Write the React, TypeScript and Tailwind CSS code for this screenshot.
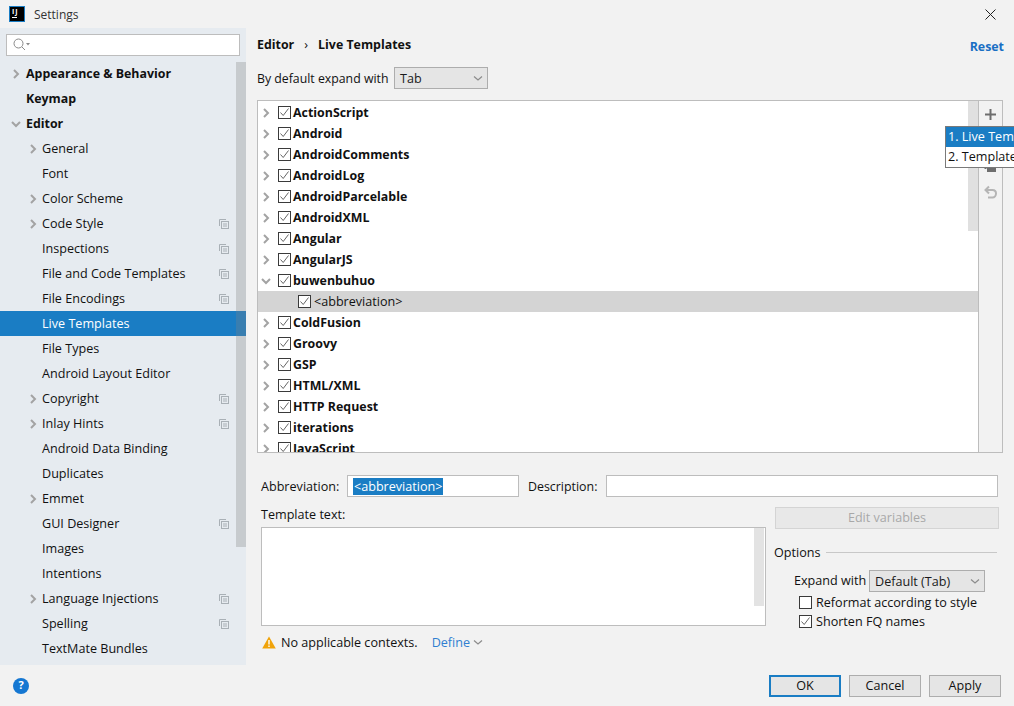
import React from "react";

const font = { fontFamily: '"Open Sans", "Noto Sans", "Noto Sans CJK SC", sans-serif' };

function Chevron({ open = false, thin = false, className = "" }: { open?: boolean; thin?: boolean; className?: string }) {
  return (
    <svg width="10" height="10" viewBox="0 0 10 10" className={className} fill="none" stroke={thin ? "#8c8c8c" : "#a3a3a3"} strokeWidth={thin ? 1.2 : 2}>
      {open ? <polyline points={thin ? "1,3.5 5,7 9,3.5" : "1,3 5,7 9,3"} /> : <polyline points="3,1 7,5 3,9" />}
    </svg>
  );
}

function Check({ checked = true }: { checked?: boolean }) {
  return (
    <span className="flex h-[13px] w-[13px] shrink-0 items-center justify-center border border-[#3a3a3a] bg-white">
      {checked && (
        <svg width="11" height="11" viewBox="0 0 11 11" fill="none" stroke="#666" strokeWidth="1">
          <polyline points="1.5,5.5 4.2,8.5 9.5,1.5" />
        </svg>
      )}
    </span>
  );
}

function CopyIcon() {
  return (
    <svg width="10" height="10" viewBox="0 0 10 10" fill="none" stroke="#a9b0b6" strokeWidth="1">
      <path d="M0.5 7V0.5H7" />
      <rect x="2.5" y="2.5" width="7" height="7" />
      <path d="M4 5H8M4 7H8" />
    </svg>
  );
}

function Select({ label, className }: { label: string; className: string }) {
  return (
    <div className={`flex h-[22px] items-center justify-between border border-[#adadad] bg-[#e5e5e5] pl-[5px] pr-[4px] text-[#1a1a1a] ${className}`}>
      <span className="mt-[2px]">{label}</span>
      <Chevron open thin />
    </div>
  );
}

function Button({ label, primary = false }: { label: string; primary?: boolean }) {
  return (
    <div className={`flex h-[22px] w-[72px] items-center justify-center bg-[#e5e5e5] text-[#111] ${primary ? "border-2 border-[#1a7dc4]" : "border border-[#adadad]"}`}>
      <span className="mt-[2px]">{label}</span>
    </div>
  );
}

type Nav = { t: string; bold?: boolean; lvl: 1 | 2; arrow?: "r" | "d"; copy?: boolean; sel?: boolean };
const nav: Nav[] = [
  { t: "Appearance & Behavior", bold: true, lvl: 1, arrow: "r" },
  { t: "Keymap", bold: true, lvl: 1 },
  { t: "Editor", bold: true, lvl: 1, arrow: "d" },
  { t: "General", lvl: 2, arrow: "r" },
  { t: "Font", lvl: 2 },
  { t: "Color Scheme", lvl: 2, arrow: "r" },
  { t: "Code Style", lvl: 2, arrow: "r", copy: true },
  { t: "Inspections", lvl: 2, copy: true },
  { t: "File and Code Templates", lvl: 2, copy: true },
  { t: "File Encodings", lvl: 2, copy: true },
  { t: "Live Templates", lvl: 2, sel: true },
  { t: "File Types", lvl: 2 },
  { t: "Android Layout Editor", lvl: 2 },
  { t: "Copyright", lvl: 2, arrow: "r", copy: true },
  { t: "Inlay Hints", lvl: 2, arrow: "r", copy: true },
  { t: "Android Data Binding", lvl: 2 },
  { t: "Duplicates", lvl: 2 },
  { t: "Emmet", lvl: 2, arrow: "r" },
  { t: "GUI Designer", lvl: 2, copy: true },
  { t: "Images", lvl: 2 },
  { t: "Intentions", lvl: 2 },
  { t: "Language Injections", lvl: 2, arrow: "r", copy: true },
  { t: "Spelling", lvl: 2, copy: true },
  { t: "TextMate Bundles", lvl: 2 },
];

const groups = ["ActionScript", "Android", "AndroidComments", "AndroidLog", "AndroidParcelable", "AndroidXML", "Angular", "AngularJS", "buwenbuhuo", "<abbreviation>", "ColdFusion", "Groovy", "GSP", "HTML/XML", "HTTP Request", "iterations", "JavaScript"];

function NavRow({ n }: { n: Nav }) {
  return (
    <div className={`relative flex h-[25px] items-center ${n.sel ? "bg-[#1a7dc4] text-white" : "text-[#111]"} ${n.bold ? "text-[12.4px] font-bold" : ""} ${n.lvl === 1 ? "pl-[26px]" : "pl-[42px]"}`}>
      {n.arrow && <Chevron open={n.arrow === "d"} className={`absolute top-[8px] ${n.lvl === 1 ? "left-[11px]" : "left-[28px]"}`} />}
      <span className="mt-[2px]">{n.t}</span>
      {n.copy && <span className="absolute right-[17px] top-[8px]"><CopyIcon /></span>}
    </div>
  );
}

function TreeRow({ t }: { t: string }) {
  const child = t === "<abbreviation>";
  return (
    <div className={`flex h-[21px] shrink-0 items-center ${child ? "bg-[#d4d4d4] pl-[40px]" : "pl-[20px]"}`}>
      {!child && <Chevron open={t === "buwenbuhuo"} className="ml-[-17px] mr-[7px]" />}
      <Check />
      <span className={child ? "ml-[3px] mt-[2px] text-[#111]" : "ml-[2px] mt-[2px] text-[12.4px] font-bold text-[#111]"}>{t}</span>
    </div>
  );
}

export default function App() {
  return (
    <div style={font} className="flex h-[706px] w-[1014px] flex-col overflow-hidden bg-[#f2f2f2] text-[12.6px] text-[#111]">
      {/* title bar */}
      <div className="flex h-[28px] shrink-0 items-center pl-[9px] pr-[18px]">
        <div className="flex h-[16px] w-[16px] flex-col border border-[#1a7dc4] bg-black pl-[2px] pt-[1px] text-white">
          <span className="text-[7px] font-bold leading-[8px] tracking-[1px]">IJ</span>
          <span className="mt-[1px] h-[1px] w-[5px] bg-white" />
        </div>
        <span className="ml-[9px] mt-[2px] text-[12px] text-[#333]">Settings</span>
        <svg className="ml-auto mt-[1px]" width="11" height="11" viewBox="0 0 11 11" stroke="#222" strokeWidth="1"><path d="M0.5 0.5L10.5 10.5M10.5 0.5L0.5 10.5" /></svg>
      </div>

      <div className="flex h-[637px] shrink-0">
        {/* sidebar */}
        <div className="flex w-[246px] shrink-0 flex-col bg-[#e6ebf0]">
          <div className="mx-[6px] mt-[6px] flex h-[22px] shrink-0 items-center border border-[#bdbdbd] bg-white pl-[6px]">
            <svg width="18" height="14" viewBox="0 0 18 14" fill="none" stroke="#8a8a8a" strokeWidth="1">
              <circle cx="5.5" cy="5.5" r="4.5" />
              <path d="M9 9L12 12" />
              <path d="M13 5H17L15 7.5Z" fill="#8a8a8a" stroke="none" />
            </svg>
          </div>
          <div className="relative min-h-0 flex-1 pt-[5px]">
            {nav.map((n) => <NavRow key={n.t} n={n} />)}
            {/* translucent overlay scrollbar */}
            <div className="absolute right-0 top-[6px] h-[485px] w-[10px] bg-[rgba(128,128,128,0.3)]" />
          </div>
        </div>

        {/* main */}
        <div className="flex min-w-0 flex-1 flex-col pl-[11px] pr-[11px]">
          <div className="flex h-[29px] shrink-0 items-center font-bold">
            <span className="mt-[5px] text-[12.4px]">Editor</span>
            <span className="mx-[10px] mt-[5px] font-normal">›</span>
            <span className="mt-[5px] text-[12.4px]">Live Templates</span>
            <span className="ml-auto mr-[-1px] mt-[10px] text-[12.4px] text-[#1a6fc4]">Reset</span>
          </div>
          <div className="mt-[10px] flex h-[22px] shrink-0 items-center">
            <span className="mt-[2px] w-[137px] whitespace-nowrap text-[12.3px]">By default expand with</span>
            <Select label="Tab" className="w-[94px]" />
          </div>

          <div className="relative mt-[11px] flex h-[353px] shrink-0 border border-[#bdbdbd]">
            <div className="relative flex min-w-0 flex-1 flex-col overflow-hidden bg-white pt-[1px]">
              {groups.map((g) => <TreeRow key={g} t={g} />)}
              <div className="absolute right-0 top-0 h-[130px] w-[10px] bg-[#e0e0e0]" />
            </div>
            <div className="flex w-[24px] shrink-0 flex-col items-center border-l border-[#bdbdbd] pt-[7px]">
              <svg width="13" height="13" viewBox="0 0 13 13" stroke="#6e6e6e" strokeWidth="2"><path d="M6.5 1V12M1 6.5H12" /></svg>
              <svg className="mt-[43px]" width="14" height="14" viewBox="0 0 14 14" fill="#6e6e6e">
                <rect x="3" y="0" width="9" height="8" />
                <rect x="0.5" y="4" width="2" height="1" />
              </svg>
              <svg className="mt-[7px]" width="15" height="15" viewBox="0 0 15 15" fill="none" stroke="#b5b5b5" strokeWidth="2">
                <path d="M3 5H9.5C11.5 5 13 6.5 13 8.5S11.5 12.5 9.5 12.5H5" />
                <path d="M6 1.5L2.5 5L6 8.5" />
              </svg>
            </div>
            {/* popup */}
            <div className="absolute left-[687px] top-[25px] w-[80px] overflow-hidden whitespace-nowrap border border-[#7a7a7a] bg-white">
              <div className="flex h-[20px] items-center bg-[#1a7dc4] pl-[2px] text-white">1. Live Template</div>
              <div className="flex h-[20px] items-center pl-[2px]">2. Template Group...</div>
            </div>
          </div>

          {/* abbreviation row */}
          <div className="mt-[22px] flex h-[22px] shrink-0 items-center">
            <span className="ml-[4px] mt-[2px] w-[86px]">Abbreviation:</span>
            <div className="flex h-[22px] w-[172px] items-center border border-[#bdbdbd] bg-white pl-[5px]">
              <span className="bg-[#1a7dc4] px-[1px] leading-[17px] text-white">&lt;abbreviation&gt;</span>
            </div>
            <span className="ml-[9px] mt-[2px] w-[78px] text-[12.4px]">Description:</span>
            <div className="h-[22px] w-[392px] border border-[#bdbdbd] bg-white" />
          </div>

          <div className="mt-[10px] flex min-h-0 flex-1">
            {/* template column */}
            <div className="ml-[4px] flex w-[505px] shrink-0 flex-col">
              <div className="flex h-[20px] items-center pb-[4px]">Template text:</div>
              <div className="flex h-[99px] shrink-0 border border-[#bdbdbd] bg-white">
                <div className="flex-1" />
                <div className="mr-[1px] h-[78px] w-[10px] bg-[#e3e3e3]" />
              </div>
              <div className="mt-[6px] flex h-[20px] items-center">
                <svg className="ml-[1px]" width="14" height="13" viewBox="0 0 14 13">
                  <path d="M7 0.5L13.8 12.5H0.2Z" fill="#f0a30a" />
                  <path d="M6.3 4H7.7V8.5H6.3ZM6.3 9.5H7.7V11H6.3Z" fill="#fff" />
                </svg>
                <span className="ml-[5px] mt-[2px]">No applicable contexts.</span>
                <span className="ml-[14px] mt-[2px] text-[#2f7fd1]">Define</span>
                <Chevron open thin className="ml-[3px]" />
              </div>
            </div>

            {/* options column */}
            <div className="ml-[9px] flex min-w-0 flex-1 flex-col">
              <div className="flex h-[22px] w-[224px] shrink-0 items-center justify-center border border-[#d4d4d4] bg-[#e8e8e8] text-[#a8a8a8]">Edit variables</div>
              <div className="mt-[13px] flex h-[20px] items-center pr-[6px]">
                <span className="ml-[-1px] mt-[2px]">Options</span>
                <div className="ml-[6px] h-[1px] flex-1 bg-[#c8c8c8]" />
              </div>
              <div className="mt-[8px] flex items-center pl-[19px]">
                <span className="w-[75px]">Expand with</span>
                <Select label="Default (Tab)" className="w-[116px]" />
              </div>
              <div className="mt-[1px] flex h-[19px] items-center pl-[24px]">
                <Check checked={false} />
                <span className="ml-[4px] mt-[2px]">Reformat according to style</span>
              </div>
              <div className="flex h-[19px] items-center pl-[24px]">
                <Check />
                <span className="ml-[4px] mt-[2px]">Shorten FQ names</span>
              </div>
            </div>
          </div>
        </div>
      </div>

      {/* footer */}
      <div className="flex h-[41px] shrink-0 items-center pl-[13px] pr-[13px]">
        <div className="flex h-[16px] w-[16px] items-center justify-center rounded-full bg-[#1577d2] text-[11px] font-bold text-white">?</div>
        <div className="ml-auto flex gap-[8px]">
          <Button label="OK" primary />
          <Button label="Cancel" />
          <Button label="Apply" />
        </div>
      </div>
    </div>
  );
}
